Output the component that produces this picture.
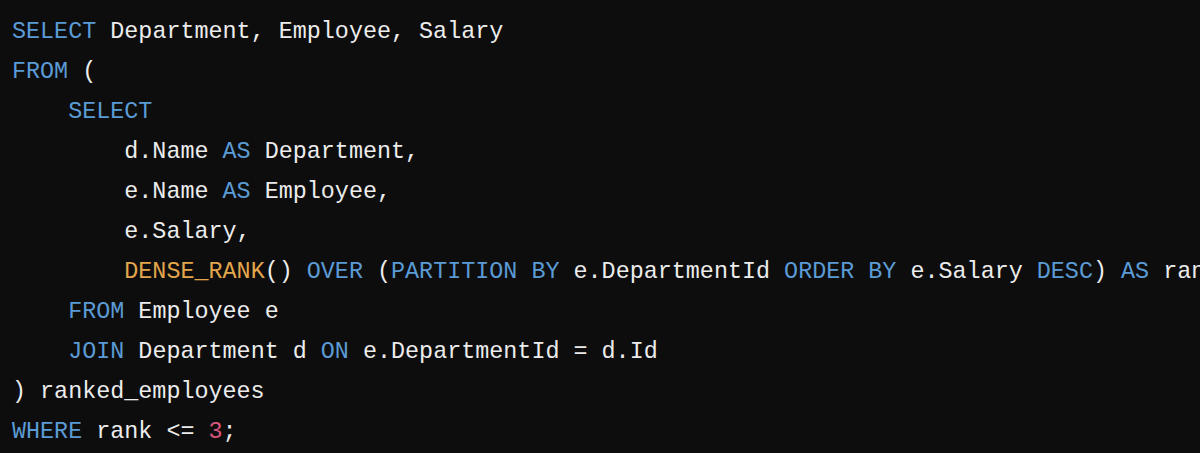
import React from "react";

const K = ({ children }: { children: React.ReactNode }) => (
  <span className="text-[#5b9bd5]">{children}</span>
);
const F = ({ children }: { children: React.ReactNode }) => (
  <span className="text-[#e3a64c]">{children}</span>
);
const N = ({ children }: { children: React.ReactNode }) => (
  <span className="text-[#d9557c]">{children}</span>
);

export default function App() {
  const lines: React.ReactNode[] = [
    <><K>SELECT</K> Department, Employee, Salary</>,
    <><K>FROM</K> (</>,
    <>    <K>SELECT</K></>,
    <>        d.Name <K>AS</K> Department,</>,
    <>        e.Name <K>AS</K> Employee,</>,
    <>        e.Salary,</>,
    <>        <F>DENSE_RANK</F>() <K>OVER</K> (<K>PARTITION</K> <K>BY</K> e.DepartmentId <K>ORDER</K> <K>BY</K> e.Salary <K>DESC</K>) <K>AS</K> rank</>,
    <>    <K>FROM</K> Employee e</>,
    <>    <K>JOIN</K> Department d <K>ON</K> e.DepartmentId = d.Id</>,
    <>) ranked_employees</>,
    <><K>WHERE</K> rank &lt;= <N>3</N>;</>,
  ];
  return (
    <div className="w-[1200px] h-[453px] bg-[#0d0d0d] overflow-hidden pt-[12px] pl-[12px]">
      <div className="font-['Liberation_Mono',monospace] text-[23.4px] leading-[40px] text-[#ececec] whitespace-pre">
        {lines.map((l, i) => (
          <div key={i}>{l}</div>
        ))}
      </div>
    </div>
  );
}
